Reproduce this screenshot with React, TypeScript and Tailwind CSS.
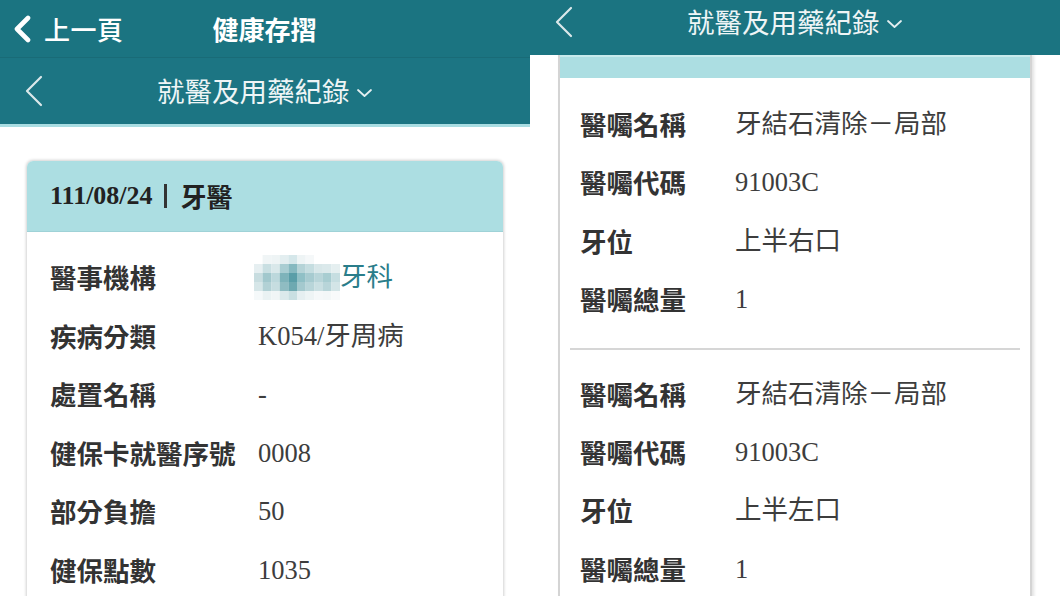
import React from "react";

const TEAL = "bg-[#1b7481]";

const mosaic: string[][] = [
  ["#ffffff", "#f0f5f6", "#eef4f5", "#e3eef0", "#d5e7ea", "#eef4f5", "#f5f8f9", "#ffffff", "#ffffff", "#ffffff"],
  ["#e6eff1", "#c9dfe2", "#d9e8ea", "#a9cdd2", "#86b9c0", "#b5d3d7", "#c5dde0", "#d8e7e9", "#dbe9eb", "#e5eff0"],
  ["#c8dde0", "#a2c8cd", "#bcd8dc", "#7eb3ba", "#5a9ea8", "#90c0c6", "#a7cbd0", "#b8d5d9", "#a8cdd1", "#c6dee1"],
  ["#d6e6e8", "#b2d1d5", "#c6dde0", "#8fbcc2", "#6ea9b1", "#a4c9ce", "#b8d5d9", "#c9dfe2", "#b8d5d9", "#d3e5e7"],
  ["#f5f9fa", "#eaf2f3", "#f0f5f6", "#dbe9eb", "#c9dfe2", "#e6eff1", "#eef4f5", "#f5f8f9", "#f3f7f8", "#f8fafb"],
];

function Mosaic() {
  return (
    <svg width="86" height="45" viewBox="0 0 86 45" className="mr-[2px]">
      {mosaic.map((row, r) =>
        row.map((c, i) => <rect key={`${r}-${i}`} x={i * 8.6} y={r * 9} width={8.7} height={9.1} fill={c} />)
      )}
    </svg>
  );
}

function ThinBack() {
  return (
    <svg width="20" height="32" viewBox="0 0 20 32" className="shrink-0">
      <polyline points="17,2 3,16 17,30" fill="none" stroke="#dbe8ea" strokeWidth="2.2" strokeLinecap="round" strokeLinejoin="round" />
    </svg>
  );
}

function DownChevron() {
  return (
    <svg width="17" height="10" viewBox="0 0 17 10" className="ml-[6px] mt-[4px]">
      <polyline points="2,2 8.5,8 15,2" fill="none" stroke="#e3eef0" strokeWidth="1.8" strokeLinecap="round" strokeLinejoin="round" />
    </svg>
  );
}

const valueFont = "font-['Liberation_Serif','Noto_Sans_CJK_TC',serif]";

function LeftRow({ label, value }: { label: string; value: React.ReactNode }) {
  return (
    <div className="flex items-center h-[58.6px]">
      <div className="w-[208px] shrink-0 font-bold text-[26.5px] text-[#333] leading-none">{label}</div>
      <div className={`${valueFont} text-[26.5px] text-[#3d3d3d] leading-none flex items-center`}>{value}</div>
    </div>
  );
}

function RightRow({ label, value }: { label: string; value: string }) {
  return (
    <div className="flex items-center h-[58.4px]">
      <div className="w-[155px] shrink-0 font-bold text-[26.5px] text-[#333] leading-none">{label}</div>
      <div className={`${valueFont} text-[26.5px] text-[#3d3d3d] leading-none`}>{value}</div>
    </div>
  );
}

export default function App() {
  return (
    <div className="w-[1060px] h-[596px] flex bg-white overflow-hidden font-['Noto_Sans_CJK_TC',sans-serif]">
      {/* Left phone */}
      <div className="w-[530px] h-[596px] flex flex-col overflow-hidden bg-white">
        <div className={`h-[58px] shrink-0 ${TEAL} flex items-center text-white border-b border-[#196b77]`}>
          <svg width="20" height="28" viewBox="0 0 20 28" className="ml-[12px] shrink-0">
            <polyline points="16,3 5,14 16,25" fill="none" stroke="#ffffff" strokeWidth="4.6" strokeLinecap="round" strokeLinejoin="round" />
          </svg>
          <span className="ml-[12px] text-[26px] font-medium leading-none tracking-[0.5px]">上一頁</span>
          <span className="ml-[89px] text-[26px] font-bold leading-none">健康存摺</span>
        </div>
        <div className="h-[69px] shrink-0 bg-[#1c7583] border-b-[3px] border-[#a9dde2] flex items-center text-white">
          <div className="ml-[24px] flex items-center">
            <ThinBack />
          </div>
          <span className="ml-[113px] text-[27.5px] font-normal leading-none text-[#eef5f6]">就醫及用藥紀錄</span>
          <DownChevron />
        </div>
        <div className="pl-[27px] pt-[34px] shrink-0">
          <div className="w-[476px] rounded-t-[6px] bg-white shadow-[0_0_3px_1px_rgba(0,0,0,0.18)]">
            <div className="h-[71px] rounded-t-[6px] bg-[#acdee2] flex items-center pl-[23px] border-b border-[#9fd2d7]">
              <span className="font-['Liberation_Serif',serif] font-bold text-[26px] text-[#222] leading-none">111/08/24</span>
              <span className="w-[3px] h-[24px] bg-[#333] ml-[11px] mr-[14px]" />
              <span className="font-bold text-[26px] text-[#222] leading-none">牙醫</span>
            </div>
            <div className="pl-[23px] pt-[16px] pb-[20px]">
              <LeftRow
                label="醫事機構"
                value={
                  <>
                    <span className="mr-[-2px] ml-[-4px] flex items-center"><Mosaic /></span>
                    <span className="text-[#2a7d8a]">牙科</span>
                  </>
                }
              />
              <LeftRow label="疾病分類" value="K054/牙周病" />
              <LeftRow label="處置名稱" value="-" />
              <LeftRow label="健保卡就醫序號" value="0008" />
              <LeftRow label="部分負擔" value="50" />
              <LeftRow label="健保點數" value="1035" />
            </div>
          </div>
        </div>
      </div>

      {/* Right phone */}
      <div className="w-[530px] h-[596px] flex flex-col overflow-hidden bg-white">
        <div className={`h-[55px] shrink-0 ${TEAL} flex items-center pb-[11px] text-white`}>
          <div className="ml-[24px] flex items-center">
            <ThinBack />
          </div>
          <span className="ml-[113px] text-[27.5px] font-normal leading-none text-[#eef5f6]">就醫及用藥紀錄</span>
          <DownChevron />
        </div>
        <div className="pl-[28px] h-[541px] shrink-0 overflow-hidden">
          <div className="w-[474px] bg-white border-x-2 border-[#d4d4d4] shadow-[2px_0_3px_rgba(0,0,0,0.12)]">
            <div className="h-[23px] bg-[#acdee2] border-t-2 border-[#c7eaec]" />
            <div className="pl-[20px] pt-[17px]">
              <RightRow label="醫囑名稱" value="牙結石清除－局部" />
              <RightRow label="醫囑代碼" value="91003C" />
              <RightRow label="牙位" value="上半右口" />
              <RightRow label="醫囑總量" value="1" />
            </div>
            <div className="mx-[10px] mt-[19px] h-[2px] bg-[#d6d6d6]" />
            <div className="pl-[20px] pt-[15px]">
              <RightRow label="醫囑名稱" value="牙結石清除－局部" />
              <RightRow label="醫囑代碼" value="91003C" />
              <RightRow label="牙位" value="上半左口" />
              <RightRow label="醫囑總量" value="1" />
            </div>
          </div>
        </div>
      </div>
    </div>
  );
}
